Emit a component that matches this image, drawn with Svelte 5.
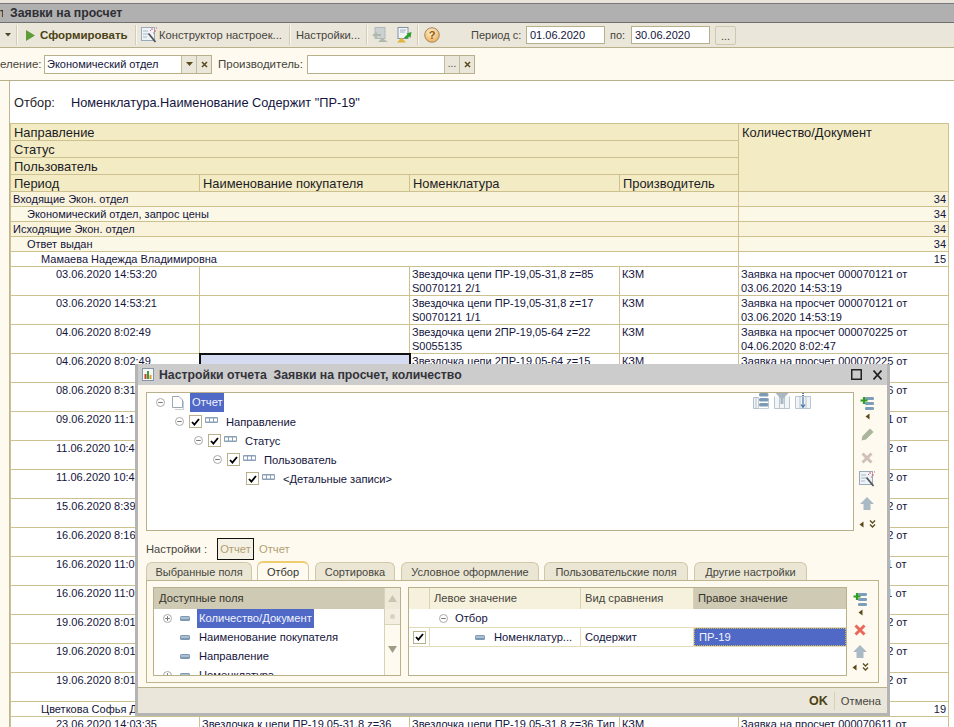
<script>
  const detail = [
    ['03.06.2020 14:53:20', '', 'Звездочка цепи ПР-19,05-31,8 z=85', 'S0070121 2/1', 'КЗМ', 'Заявка на просчет 000070121 от', '03.06.2020 14:53:19'],
    ['03.06.2020 14:53:21', '', 'Звездочка цепи ПР-19,05-31,8 z=17', 'S0070121 1/1', 'КЗМ', 'Заявка на просчет 000070121 от', '03.06.2020 14:53:19'],
    ['04.06.2020 8:02:49', '', 'Звездочка цепи 2ПР-19,05-64 z=22', 'S0055135', 'КЗМ', 'Заявка на просчет 000070225 от', '04.06.2020 8:02:47'],
    ['04.06.2020 8:02:49', 'sel', 'Звездочка цепи 2ПР-19,05-64 z=15', 'S0055135', 'КЗМ', 'Заявка на просчет 000070225 от', '04.06.2020 8:02:47'],
    ['08.06.2020 8:31:10', '', 'Звездочка цепи', '', 'КЗМ', 'Заявка на просчет 000070266 от', ''],
    ['09.06.2020 11:15:02', '', 'Звездочка цепи', '', 'КЗМ', 'Заявка на просчет 000070291 от', ''],
    ['11.06.2020 10:49:12', '', 'Звездочка цепи', '', 'КЗМ', 'Заявка на просчет 000070332 от', ''],
    ['11.06.2020 10:49:13', '', 'Звездочка цепи', '', 'КЗМ', 'Заявка на просчет 000070332 от', ''],
    ['15.06.2020 8:39:40', '', 'Звездочка цепи', '', 'КЗМ', 'Заявка на просчет 000070382 от', ''],
    ['16.06.2020 8:16:21', '', 'Звездочка цепи', '', 'КЗМ', 'Заявка на просчет 000070402 от', ''],
    ['16.06.2020 11:03:11', '', 'Звездочка цепи', '', 'КЗМ', 'Заявка на просчет 000070411 от', ''],
    ['16.06.2020 11:03:12', '', 'Звездочка цепи', '', 'КЗМ', 'Заявка на просчет 000070411 от', ''],
    ['19.06.2020 8:01:15', '', 'Звездочка цепи', '', 'КЗМ', 'Заявка на просчет 000070512 от', ''],
    ['19.06.2020 8:01:16', '', 'Звездочка цепи', '', 'КЗМ', 'Заявка на просчет 000070512 от', ''],
    ['19.06.2020 8:01:17', '', 'Звездочка цепи', '', 'КЗМ', 'Заявка на просчет 000070512 от', '']
  ];
  const groups = [
    ['Входящие Экон. отдел', '34', 'g1', 'i0'],
    ['Экономический отдел, запрос цены', '34', 'g2', 'i1'],
    ['Исходящие Экон. отдел', '34', 'g1', 'i0'],
    ['Ответ выдан', '34', 'g2', 'i1'],
    ['Мамаева Надежда Владимировна', '15', 'g3', 'i2']
  ];
  const tabs = ['Выбранные поля', 'Отбор', 'Сортировка', 'Условное оформление', 'Пользовательские поля', 'Другие настройки'];
  const tree = [
    ['Направление', 'l1'], ['Статус', 'l2'], ['Пользователь', 'l3'], ['<Детальные записи>', 'l4']
  ];
  const fields = [
    ['Количество/Документ', true, true], ['Наименование покупателя', false, false],
    ['Направление', false, false], ['Номенклатура', true, false]
  ];
</script>

{#snippet arrowTri()}
  <svg class="mini" width="5" height="7" viewBox="0 0 5 7"><path d="M4.5 0.5V6.5L0.5 3.5Z" fill="#5a4a1a"/></svg>
{/snippet}
{#snippet chevrons()}
  <svg class="mini" width="7" height="8" viewBox="0 0 7 8"><path d="M1 0.5L3.5 3L6 0.5M1 4.5L3.5 7L6 4.5" fill="none" stroke="#5a4a1a" stroke-width="1.3"/></svg>
{/snippet}
{#snippet addIcon()}
  <svg width="14" height="16" viewBox="0 0 14 16">
    <rect x="5" y="1" width="9" height="3" rx="1.2" fill="#7c9dbb"/><rect x="5" y="6" width="9" height="3" rx="1.2" fill="#7c9dbb"/><rect x="5" y="11" width="9" height="3" rx="1.2" fill="#7c9dbb"/>
    <path d="M4 1V8M0.500 4.500H7.500" stroke="#2f9e1f" stroke-width="2.2"/>
  </svg>
{/snippet}
{#snippet upIcon()}
  <svg width="14" height="13" viewBox="0 0 14 13"><path d="M7 0L14 7H10.500V13H3.500V7H0Z" fill="#a9bac6"/></svg>
{/snippet}
{#snippet crossIcon(c)}
  <svg width="12" height="12" viewBox="0 0 12 12"><path d="M1.500 1.500L10.500 10.500M10.500 1.500L1.500 10.500" stroke={c} stroke-width="3"/></svg>
{/snippet}
{#snippet wand()}
  <svg width="16" height="16" viewBox="0 0 16 16">
    <rect x="0.500" y="0.500" width="13" height="13" fill="#eef3f8" stroke="#9aaab8"/>
    <path d="M2 4H7M2 7H7M2 10H6" stroke="#a9b8c5"/>
    <path d="M7.500 6.500L14.500 15" stroke="#50545a" stroke-width="1.8"/>
    <path d="M11 1V3M14 3V5M9 3.500H10M12 6H13M15 1H16" stroke="#dc5a78"/>
  </svg>
{/snippet}
{#snippet minusCircle()}
  <svg class="tg" width="9" height="9" viewBox="0 0 9 9"><circle cx="4.500" cy="4.500" r="4" fill="#fff" stroke="#a8a8a8"/><path d="M2.200 4.500H6.800" stroke="#777"/></svg>
{/snippet}
{#snippet plusCircle()}
  <svg class="tg" width="9" height="9" viewBox="0 0 9 9"><circle cx="4.500" cy="4.500" r="4" fill="#fff" stroke="#a8a8a8"/><path d="M2.200 4.500H6.800M4.500 2.200V6.800" stroke="#777"/></svg>
{/snippet}
{#snippet check()}
  <span class="cb"><svg width="9" height="8" viewBox="0 0 9 8"><path d="M1 4L3.400 6.600L8 1" fill="none" stroke="#000" stroke-width="1.800"/></svg></span>
{/snippet}
{#snippet group3()}
  <svg width="13" height="6" viewBox="0 0 13 6"><rect width="13" height="6" rx="1" fill="#8aa0b4"/><rect x="1" y="1.500" width="3" height="3" fill="#fff"/><rect x="5" y="1.500" width="3" height="3" fill="#fff"/><rect x="9" y="1.500" width="3" height="3" fill="#fff"/></svg>
{/snippet}
{#snippet field()}
  <svg class="fic" width="10" height="5" viewBox="0 0 10 5"><rect width="10" height="5" rx="1.500" fill="#7d99b3"/><rect x="1" y="1.500" width="8" height="1" fill="#dbe5ee"/></svg>
{/snippet}
{#snippet xs()}
  <svg width="7" height="7" viewBox="0 0 7 7"><path d="M1 1L6 6M6 1L1 6" stroke="#5a4a1a" stroke-width="1.500"/></svg>
{/snippet}

<div class="page">
  <div class="topline"></div>
  <header class="titlebar"><span class="tleft">т</span><span>Заявки на просчет</span></header>

  <div class="toolbar">
    <svg class="ddarrow" width="6" height="4" viewBox="0 0 6 4"><path d="M0 0H6L3 3.500Z" fill="#4a4a30"/></svg>
    <i class="sep s1"></i>
    <svg class="play" width="9" height="11" viewBox="0 0 9 11"><path d="M0 0L9 5.500L0 11Z" fill="#5e9c3a"/></svg>
    <b class="gen">Сформировать</b>
    <i class="sep"></i>
    <span class="m4">{@render wand()}</span>
    <span class="tb t-a">Конструктор настроек...</span>
    <i class="sep s7"></i>
    <span class="tb t-b">Настройки...</span>
    <i class="sep s6"></i>
    <svg class="m4" width="16" height="16" viewBox="0 0 16 16" opacity="0.6"><rect x="3" y="0.500" width="10" height="11" fill="#b7c3cc" stroke="#8c9aa5"/><path d="M0 8L5 5V7H9V9H5V11ZM6 15L10 11L16 15Z" fill="#8c9a92"/></svg>
    <svg class="i2nd" width="16" height="16" viewBox="0 0 16 16"><rect x="2" y="0.500" width="10" height="11" fill="#f1f5f8" stroke="#7f93a3"/><path d="M4 3H10M4 5H9" stroke="#9fb0bd"/><path d="M15.500 5L10.500 6.500L11.500 7.500L8 10.500L10.500 12L13 9.500L14.500 11Z" fill="#2e9e2f"/><path d="M1 15.500L5.500 10.500L10 15.500Z" fill="#e0b63a"/></svg>
    <i class="sep s5"></i>
    <svg class="help" width="16" height="16" viewBox="0 0 16 16"><defs><radialGradient id="hg" cx="0.45" cy="0.35" r="0.7"><stop offset="0" stop-color="#fff3d8"/><stop offset="1" stop-color="#eba94e"/></radialGradient></defs><circle cx="8" cy="8" r="7.300" fill="url(#hg)" stroke="#a88a66"/><text x="8" y="12" text-anchor="middle" class="q">?</text></svg>
    <span class="period">Период с:</span>
    <span class="date">01.06.2020</span>
    <span class="po">по:</span>
    <span class="date">30.06.2020</span>
    <span class="dots">...</span>
  </div>

  <div class="filterbar">
    <span class="flab left">еление:</span>
    <span class="input"><span class="val">Экономический отдел</span><span class="btn"><svg width="7" height="4" viewBox="0 0 7 4"><path d="M0 0H7L3.500 4Z" fill="#5a4a1a"/></svg></span><span class="btn">{@render xs()}</span></span>
    <span class="flab man">Производитель:</span>
    <span class="input"><span class="val"></span><span class="btn dotsb">...</span><span class="btn">{@render xs()}</span></span>
  </div>

  <main class="report">
    <aside class="side"></aside>
    <div class="sheet">
      <div class="selrow"><span class="sl">Отбор:</span><span>Номенклатура.Наименование Содержит "ПР-19"</span></div>
      <table>
        <colgroup><col class="c1"/><col class="c2"/><col class="c3"/><col class="c4"/><col class="c5"/></colgroup>
        <thead>
          <tr class="h"><th colspan="4">Направление</th><th rowspan="4" class="qty">Количество/Документ</th></tr>
          <tr class="h"><th colspan="4">Статус</th></tr>
          <tr class="h"><th colspan="4">Пользователь</th></tr>
          <tr class="h"><th>Период</th><th>Наименование покупателя</th><th>Номенклатура</th><th>Производитель</th></tr>
        </thead>
        <tbody>
          {#each groups as g}
            <tr class="grp {g[2]}"><td colspan="4" class={g[3]}>{g[0]}</td><td class="num">{g[1]}</td></tr>
          {/each}
          {#each detail as d}
            <tr class="det">
              <td class="per">{d[0]}</td>
              <td class:sel={d[1] === 'sel'}></td>
              <td>{d[2]}<br/>{d[3]}</td>
              <td>{d[4]}</td>
              <td>{d[5]}<br/>{d[6]}</td>
            </tr>
          {/each}
          <tr class="grp g3"><td colspan="4" class="i2">Цветкова Софья Дмитриевна</td><td class="num">19</td></tr>
          <tr class="det">
            <td class="per">23.06.2020 14:03:35</td>
            <td>Звездочка к цепи ПР-19,05-31,8 z=36</td>
            <td>Звездочка цепи ПР-19,05-31,8 z=36 Тип</td>
            <td>КЗМ</td>
            <td>Заявка на просчет 000070611 от</td>
          </tr>
        </tbody>
      </table>
    </div>
  </main>

  <section class="dialog">
    <div class="dtitle">
      <svg width="12" height="13" viewBox="0 0 12 13"><rect x="0.500" y="0.500" width="11" height="12" fill="#f4f6f8" stroke="#8696a5"/><rect x="2.500" y="6" width="2" height="5" fill="#c8402a"/><rect x="5" y="3" width="2" height="8" fill="#3f9a3a"/><rect x="7.500" y="7" width="2" height="4" fill="#d8a030"/></svg>
      <span class="dt">Настройки отчета&nbsp; Заявки на просчет, количество</span>
      <svg class="wbtn" width="11" height="11" viewBox="0 0 11 11"><path d="M0.750 0.750H10.250V10.250H0.750Z" fill="none" stroke="#222" stroke-width="1.500"/></svg>
      <svg class="wbtn x" width="9" height="10" viewBox="0 0 9 10"><path d="M0.500 0.500L8.500 9.500M8.500 0.500L0.500 9.500" stroke="#222" stroke-width="1.700"/></svg>
    </div>
    <div class="dbody">
      <div class="toprow">
        <div class="treebox">
          <div class="tr l0">
            {@render minusCircle()}
            <svg class="doc" width="13" height="14" viewBox="0 0 13 14"><path d="M0.500 0.500H7L10.500 4V11.500H0.500Z" fill="#fff" stroke="#9aa6b2"/><path d="M11.500 5V13.500H3" fill="none" stroke="#c4ccd4"/></svg>
            <span class="hl">Отчет</span>
          </div>
          {#each tree as t, i}
            <div class="tr {t[1]}">
              {#if i < 3}{@render minusCircle()}{/if}
              {@render check()}
              <span class="g3i">{@render group3()}</span>
              <span class="tl">{t[0]}</span>
            </div>
          {/each}
          <div class="treeicons">
            <svg width="16" height="16" viewBox="0 0 16 16"><path d="M0.500 4.500H5.500V15.500H0.500ZM3 5V15" fill="#f2f5f8" stroke="#b3bfca"/><path d="M5.500 5V15.500H15.500V5" fill="none" stroke="#c4cfd8"/><rect x="6" y="0" width="9.500" height="3.500" rx="1.500" fill="#7e9bb5"/><rect x="6" y="5" width="9.500" height="3.500" rx="1.500" fill="#7e9bb5"/><rect x="6" y="10" width="9.500" height="3.500" rx="1.500" fill="#7e9bb5"/></svg>
            <svg width="16" height="16" viewBox="0 0 16 16"><path d="M0.500 3.500V15.500H15.500V3.500M5.500 3.500V15.500M10.500 3.500V15.500" fill="#f2f5f8" stroke="#b9c5cf"/><path d="M1.500 0H14.500L9.500 5.500V11H6.500V5.500Z" fill="#aab7c2"/></svg>
            <svg width="16" height="16" viewBox="0 0 16 16"><path d="M0.500 3.500H15.500V15.500H0.500ZM5 3.500V15.500M11 3.500V15.500" fill="#f2f5f8" stroke="#b9c5cf"/><path d="M8 4V14M6 11.500L8 14.500L10 11.500" fill="none" stroke="#4a78a8" stroke-width="1.200"/><path d="M7 0.500H9M7 2.500H9" stroke="#4a78a8"/></svg>
          </div>
        </div>
        <div class="vtools v1">
          <div class="ti add">{@render addIcon()}</div>
          <div class="ti tri">{@render arrowTri()}</div>
          <div class="ti edit"><svg width="13" height="13" viewBox="0 0 13 13"><path d="M9 0.500L12.500 4L5 11.500L0.500 12.500L1.500 8Z" fill="#aab59c"/></svg></div>
          <div class="ti del">{@render crossIcon('#cfc0b8')}</div>
          <div class="ti wd">{@render wand()}</div>
          <div class="ti up">{@render upIcon()}</div>
          <div class="ti end">{@render arrowTri()}{@render chevrons()}</div>
        </div>
      </div>

      <div class="setrow">
        <span class="setl">Настройки :</span>
        <span class="setb">Отчет</span>
        <span class="setp">Отчет</span>
      </div>

      <div class="tabs">
        {#each tabs as t, i}
          <span class="tab" class:on={i === 1}>{t}</span>
        {/each}
      </div>
      <div class="tabbody">
        <div class="fields">
          <div class="fmain">
            <div class="fhead">Доступные поля</div>
            {#each fields as f}
              <div class="frow">
                <span class="pl">{#if f[1]}{@render plusCircle()}{/if}</span>
                {@render field()}
                <span class="ftext" class:hl={f[2]}>{f[0]}</span>
              </div>
            {/each}
          </div>
          <div class="fscroll">
            <div class="scup"><svg width="9" height="7" viewBox="0 0 9 7"><path d="M4.500 0L9 7H0Z" fill="#c9c5b3"/></svg></div>
            <div class="thumb"><i></i></div>
            <svg class="down" width="9" height="7" viewBox="0 0 9 7"><path d="M0 0H9L4.500 7Z" fill="#a09c88"/></svg>
          </div>
        </div>
        <div class="flt">
          <div class="fgrid gh">
            <span class="gc"></span><span class="gc">Левое значение</span><span class="gc">Вид сравнения</span><span class="gc act">Правое значение</span>
          </div>
          <div class="fgrid r1">
            <span class="wide">{@render minusCircle()}<span>Отбор</span></span>
          </div>
          <div class="fgrid r2">
            <span class="gd ck">{@render check()}</span>
            <span class="gd nm">{@render field()}<span>Номенклатур...</span></span>
            <span class="gd">Содержит</span>
            <span class="gd pick">ПР-19</span>
          </div>
        </div>
        <div class="vtools v2">
          <div class="ti add">{@render addIcon()}</div>
          <div class="ti tri">{@render arrowTri()}</div>
          <div class="ti del2">{@render crossIcon('#e8695c')}</div>
          <div class="ti up2">{@render upIcon()}</div>
          <div class="ti end2">{@render arrowTri()}{@render chevrons()}</div>
        </div>
      </div>
    </div>
    <div class="dfoot">
      <b class="ok">OK</b><i class="fsep"></i><span class="cancel">Отмена</span>
    </div>
  </section>
</div>

<style>
  :global(body) { margin: 0; background: #fff; }
  .page { position: relative; width: 954px; height: 727px; overflow: hidden; font-family: "Liberation Sans", Arial, sans-serif; color: #1c1c24; background: #fff; }
  .topline { height: 3px; background: #e8e4da; border-bottom: 1px solid #777; }
  .titlebar { height: 18px; background: #b0b0b0; border-bottom: 1px solid #707070; display: flex; align-items: center; font-size: 12.25px; font-weight: bold; color: #2e2e34; }
  .tleft { width: 3px; margin-right: 7px; overflow: hidden; }

  .toolbar { height: 24px; background: #ebe6da; border-bottom: 1px solid #b8b08a; display: flex; align-items: center; font-size: 11.2px; color: #45453c; white-space: nowrap; }
  .toolbar svg { flex: none; }
  .ddarrow { margin-left: 5px; }
  .sep { width: 1px; height: 20px; background: #d3ccb6; border-right: 1px solid #f8f6ee; flex: none; }
  .s1 { margin-left: 5px; }
  .s7 { margin-left: 7px; }
  .s6 { margin-left: 6px; }
  .s5 { margin-left: 5px; }
  .play { margin-left: 8px; }
  .gen { font-size: 11.5px; color: #4a4314; margin-left: 5px; width: 95px; }
  .m4 { margin-left: 4px; display: inline-flex; }
  .tb { margin-left: 2px; }
  .t-a { width: 123px; }
  .t-b { margin-left: 5px; width: 64px; }
  .i2nd { margin-left: 8px; }
  .help { margin-left: 5px; }
  .q { font: bold 11px "Liberation Sans", sans-serif; fill: #8a5a10; }
  .period { margin-left: 31px; font-size: 11px; width: 50px; }
  .date { width: 79px; height: 18px; box-sizing: border-box; margin-left: 5px; padding-left: 3px; border: 1px solid #b8b08a; background: #fff; font-size: 11px; line-height: 17px; color: #14143c; }
  .po { margin-left: 5px; font-size: 11px; width: 16px; }
  .dots { margin-left: 5px; width: 21px; height: 19px; box-sizing: border-box; border: 1px solid #cfc8b0; border-radius: 2px; text-align: center; line-height: 18px; font-size: 11px; }

  .filterbar { height: 32px; background: #fffaf0; border-bottom: 1px solid #b8b08a; display: flex; align-items: center; font-size: 11.5px; color: #45453c; white-space: nowrap; }
  .flab.left { width: 44px; }
  .flab.man { width: 89px; margin-left: 6px; }
  .input { display: flex; width: 168px; height: 19px; box-sizing: border-box; border: 1px solid #b8b08a; background: #fff; }
  .val { flex: 1; font-size: 11px; line-height: 17px; padding-left: 2px; color: #14143c; }
  .btn { width: 14px; background: #ebe6da; border-left: 1px solid #c4bc98; display: flex; align-items: center; justify-content: center; }
  .dotsb { font-size: 10px; line-height: 10px; }

  .report { display: flex; height: 646px; }
  .side { width: 9px; background: #fffaf0; border-right: 1px solid #bdb58c; flex: none; }
  .sheet { flex: 1; min-width: 0; }
  .selrow { height: 29px; display: flex; align-items: flex-end; font-size: 12.75px; color: #14143c; padding: 0 0 13px 4px; line-height: 14px; }
  .sl { width: 57px; color: #1c1c24; }
  table { border-collapse: collapse; table-layout: fixed; width: 938px; }
  .c1 { width: 189px; } .c2 { width: 210px; } .c3 { width: 210px; } .c4 { width: 119px; } .c5 { width: 210px; }
  th, td { border: 1px solid #cdc28f; padding: 0; overflow: hidden; white-space: nowrap; vertical-align: top; }
  th { background: #f3ebc4; font-weight: normal; text-align: left; font-size: 12.9px; height: 15px; line-height: 15px; padding: 1px 0 0 3px; color: #1c1c24; }
  .grp td { height: 14px; font-size: 11px; line-height: 14px; color: #14143c; }
  .g1 td { background: #f8f3da; }
  .g2 td { background: #fbf8e8; }
  .g3 td { background: #fff; }
  .i0 { padding-left: 2px; } .i1 { padding-left: 16px; } .i2 { padding-left: 30px; }
  .num { text-align: right; padding-right: 2px; }
  .det td { height: 28px; font-size: 11px; line-height: 14px; color: #14143c; padding-left: 2px; }
  .det td.per { padding-left: 45px; }
  td.sel { background: #d5dcf2; outline: 2px solid #111; outline-offset: -1px; }

  .dialog { position: absolute; left: 135px; top: 364px; width: 755px; height: 352px; background: #fffaf0; box-sizing: border-box; border: 3px solid #b4b4b4; border-top: none; display: flex; flex-direction: column; }
  .dtitle { height: 21px; background: #cccccc; display: flex; align-items: center; padding-left: 4px; flex: none; }
  .dt { margin-left: 5px; font-size: 12.25px; font-weight: bold; color: #33333a; flex: 1; white-space: nowrap; }
  .wbtn { margin-right: 11px; }
  .wbtn.x { margin-right: 5px; }
  .dbody { flex: 1; padding: 7px 0 0 8px; min-height: 0; }
  .toprow { display: flex; height: 146px; }
  .treebox { position: relative; width: 708px; height: 139px; box-sizing: border-box; border: 1px solid #b8b08a; background: #fff; font-size: 11.2px; }
  .tr { display: flex; align-items: center; height: 19px; color: #14143c; white-space: nowrap; }
  .tr.l0 { padding-left: 9px; }
  .tr.l1 { padding-left: 28px; }
  .tr.l2 { padding-left: 47px; }
  .tr.l3 { padding-left: 66px; }
  .tr.l4 { padding-left: 99px; }
  .tr .tg { margin-right: 5px; }
  .doc { margin-left: 2px; margin-right: 5px; }
  .hl { background: #5069c6; color: #f2f4ff; line-height: 19px; }
  .tr.l0 .hl { width: 34px; padding-left: 2px; box-sizing: border-box; }
  .cb { width: 13px; height: 13px; box-sizing: border-box; border: 1px solid #b8b08a; background: #fff; display: inline-flex; align-items: center; justify-content: center; flex: none; }
  .g3i { display: inline-flex; margin: 0 8px 4px 3px; }
  .treeicons { position: absolute; right: 42px; top: 0; display: flex; gap: 5px; }
  .vtools { display: flex; flex-direction: column; align-items: center; width: 26px; flex: none; }
  .ti { display: flex; justify-content: center; align-items: center; }
  .v1 .add { margin-top: 4px; }
  .v1 .tri { margin-top: 1px; }
  .v1 .edit { margin-top: 8px; }
  .v1 .del { margin-top: 11px; }
  .v1 .wd { margin-top: 7px; }
  .v1 .up { margin-top: 10px; }
  .v1 .end { margin-top: 10px; gap: 5px; }
  .setrow { display: flex; align-items: center; height: 22px; font-size: 11.2px; }
  .setl { width: 71px; color: #45453c; }
  .setb { width: 37px; height: 22px; box-sizing: border-box; border: 1px solid #111; background: #f5f0e4; color: #b0a070; line-height: 20px; text-align: center; }
  .setp { margin-left: 5px; color: #b0a070; }
  .tabs { display: flex; height: 18px; margin-top: 2px; gap: 5px; font-size: 11px; position: relative; z-index: 1; }
  .tab { background: #ebe6d4; border: 1px solid #cfc8a8; border-bottom: none; border-radius: 6px 6px 0 0; padding-top: 2px; line-height: 15px; color: #45453c; height: 18px; box-sizing: border-box; white-space: nowrap; text-align: center; }
  .tab:nth-child(1) { width: 106px; }
  .tab:nth-child(2) { width: 52px; }
  .tab:nth-child(3) { width: 80px; margin-left: 1px; }
  .tab:nth-child(4) { width: 138px; margin-left: 1px; }
  .tab:nth-child(5) { width: 144px; }
  .tab:nth-child(6) { width: 113px; margin-left: 1px; }
  .tab.on { background: #fffaf0; height: 19px; margin-top: -1px; border-top: 2px solid #f0cc70; padding-top: 2px; color: #33332c; }
  .tabbody { display: flex; width: 733px; height: 103px; box-sizing: border-box; border: 1px solid #bdb58c; padding: 6px 0 0 6px; gap: 7px; }
  .fields { display: flex; width: 248px; height: 89px; box-sizing: border-box; border: 1px solid #b8b08a; background: #fff; overflow: hidden; flex: none; }
  .fmain { flex: 1; min-width: 0; }
  .fhead { height: 21px; background: #cfcab4; font-size: 11.2px; line-height: 21px; padding-left: 5px; color: #33332c; }
  .frow { display: flex; align-items: center; height: 19px; font-size: 11.2px; color: #14143c; white-space: nowrap; }
  .pl { width: 26px; padding-left: 9px; box-sizing: border-box; display: inline-flex; flex: none; }
  .ftext { margin-left: 7px; padding: 0 2px; line-height: 19px; }
  .fscroll { width: 16px; border-left: 1px solid #d8d2b8; background: #fffaf0; display: flex; flex-direction: column; align-items: center; flex: none; box-sizing: border-box; }
  .scup { width: 100%; height: 21px; background: #eee9d8; display: flex; align-items: center; justify-content: center; }
  .thumb { width: 100%; height: 15px; background: #f4efe0; border-bottom: 1px solid #d8d2b8; display: flex; align-items: center; justify-content: center; }
  .thumb i { width: 5px; height: 5px; border-radius: 50%; background: #d8d2c0; }
  .down { margin-top: 21px; }
  .flt { width: 439px; height: 89px; box-sizing: border-box; border: 1px solid #b8b08a; background: #fff; flex: none; font-size: 11.2px; }
  .fgrid { display: grid; grid-template-columns: 21px 151px 113px 1fr; height: 18px; border-bottom: 1px solid #e4dcb8; color: #14143c; white-space: nowrap; }
  .gh { height: 21px; background: #f6f1dc; color: #45453c; line-height: 21px; border-bottom: none; }
  .gc { border-right: 1px solid #d8d2b0; padding-left: 4px; }
  .gc.act { background: #cfcab4; border-right: none; color: #33332c; }
  .wide { grid-column: 1 / 5; display: flex; align-items: center; padding-left: 30px; }
  .wide .tg { margin-right: 7px; }
  .gd { border-right: 1px solid #e4dcb8; padding-left: 4px; display: flex; align-items: center; }
  .ck { padding-left: 4px; }
  .nm { padding-left: 45px; gap: 9px; }
  .nm .fic { flex: none; }
  .pick { background: #5069c6; color: #f2f4ff; outline: 1px dotted #c8b860; outline-offset: -1px; border-right: none; padding-left: 5px; }
  .v2 { margin-left: -7px; }
  .v2 .add { margin-top: 5px; }
  .v2 .tri { margin-top: 1px; }
  .v2 .del2 { margin-top: 8px; }
  .v2 .up2 { margin-top: 9px; }
  .v2 .end2 { margin-top: 5px; gap: 5px; }
  .dfoot { height: 25px; flex: none; background: #ebe6da; border-top: 1px solid #b8b08a; display: flex; align-items: center; justify-content: flex-end; padding-right: 6px; font-size: 11.2px; color: #45453c; }
  .ok { font-size: 12.5px; color: #4a4314; }
  .fsep { width: 1px; height: 18px; background: #d8d2b0; margin: 0 6px; }
</style>
